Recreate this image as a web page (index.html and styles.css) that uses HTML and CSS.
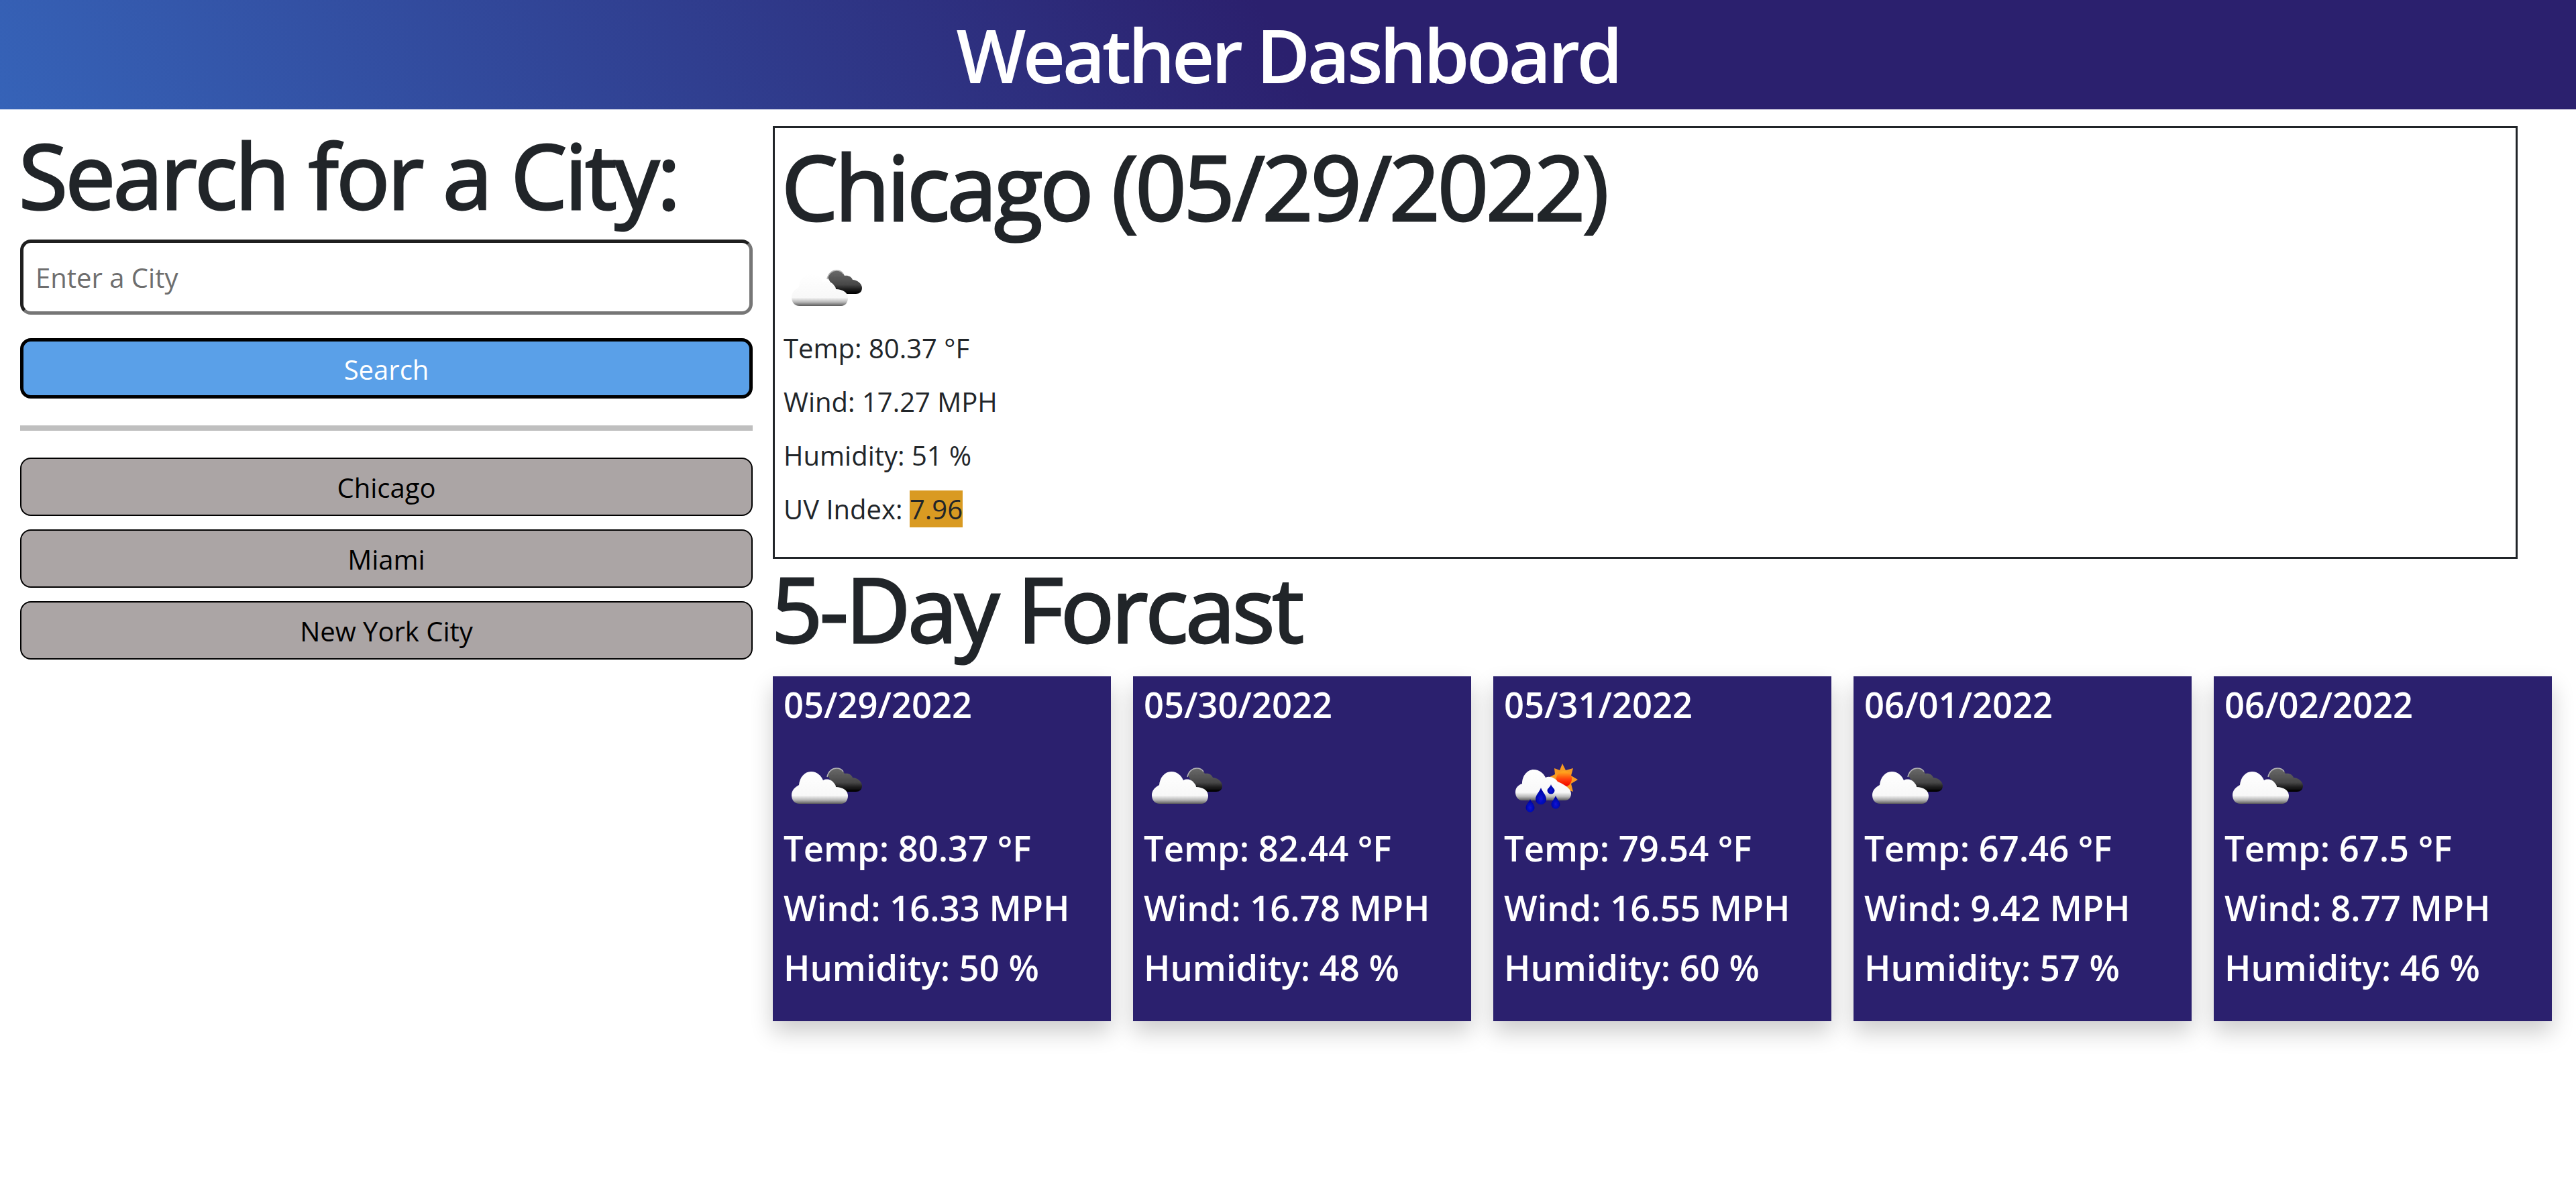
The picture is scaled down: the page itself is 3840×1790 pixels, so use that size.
FILE: index.html
```html
<!DOCTYPE html>
<html lang="en">
<head>
  <meta charset="UTF-8">
  <title>Weather Dashboard</title>
  <link rel="stylesheet" href="styles.css">
</head>
<body>
  <svg class="icon-defs" aria-hidden="true">
    <defs>
      <linearGradient id="whiteCloud" x1="0" y1="0" x2="0" y2="1">
        <stop offset="0" stop-color="#ffffff"/>
        <stop offset="0.74" stop-color="#f8f8f8"/>
        <stop offset="0.88" stop-color="#b8b8b8"/>
        <stop offset="1" stop-color="#5c5c5c"/>
      </linearGradient>
      <linearGradient id="darkCloud" x1="0" y1="0" x2="0" y2="1">
        <stop offset="0" stop-color="#6a6a6a"/>
        <stop offset="0.6" stop-color="#484848"/>
        <stop offset="0.85" stop-color="#151515"/>
        <stop offset="1" stop-color="#000000"/>
      </linearGradient>
      <linearGradient id="sunFill" x1="0" y1="0" x2="0" y2="1">
        <stop offset="0" stop-color="#ffb020"/>
        <stop offset="0.55" stop-color="#ff3a08"/>
        <stop offset="1" stop-color="#f00000"/>
      </linearGradient>
      <radialGradient id="dropFill" cx="0.5" cy="0.65" r="0.6">
        <stop offset="0" stop-color="#0a14d8"/>
        <stop offset="1" stop-color="#00009a"/>
      </radialGradient>
      <filter id="soft" x="-10%" y="-10%" width="120%" height="120%">
        <feGaussianBlur stdDeviation="0.7"/>
      </filter>
      <symbol id="cloudsIcon" viewBox="0 0 120 120">
        <g filter="url(#soft)">
          <path d="M66 44 C68 36 74 33 79 33 C85 33 89 37 91 41 C96 40 101 42 103 47 C109 47 117 52 117 59 C117 65 113 68 108 68 L80 68 Z" fill="url(#darkCloud)"/>
          <path d="M65 46 C67 37 73 33 79 33 C83 33 87 35 89 38" fill="none" stroke="#b5b5b5" stroke-width="1.6"/>
          <path d="M24 86 C16 86 12 80 12 73 C12 66 17 61 23 58 C24 47 31 38 41 38 C50 38 56 44 59 51 C64 48 72 50 75 55 C77 57 78 59 78 61 C88 61 96 66 96 74 C96 81 92 86 86 86 Z" fill="url(#whiteCloud)"/>
        </g>
      </symbol>
      <symbol id="rainIcon" viewBox="0 0 120 120">
        <g filter="url(#soft)">
          <path d="M87 26 L92 36 L103 33 L100 44 L110 50 L100 56 L103 68 L92 64 L86 72 L80 62 L70 65 L73 54 L66 47 L76 42 L75 33 L83 36 Z" fill="#f79a20"/>
          <circle cx="89.5" cy="49" r="11.5" fill="url(#sunFill)"/>
          <path d="M27 81 C21 81 17 75 17 69 C17 62 21 58 27 56 C27 44 35 35 44 35 C53 35 59 41 62 47 C67 44 76 47 80 53 C87 56 100 62 100 71 C100 77 96 81 91 81 Z" fill="url(#whiteCloud)"/>
          <path d="M55 62 C57 68 63 73 63 79 A8 8 0 0 1 47 79 C47 73 53 68 55 62 Z" fill="url(#dropFill)"/>
          <path d="M39 79 C41 84 45.500 87 45.500 92 A6.500 6.500 0 0 1 32.500 92 C32.500 87 37 84 39 79 Z" fill="url(#dropFill)"/>
          <path d="M77 74 C79 79 83.500 83 83.500 87 A6.500 6.500 0 0 1 70.500 87 C70.500 83 75 79 77 74 Z" fill="url(#dropFill)"/>
          <path d="M70 57 C71 61 75.500 63 75.500 66 A5.500 5.500 0 0 1 64.500 66 C64.500 63 69 61 70 57 Z" fill="url(#dropFill)"/>
        </g>
      </symbol>
    </defs>
  </svg>

  <header class="banner">
    <h1 class="banner-title">Weather Dashboard</h1>
  </header>

  <div class="layout">
    <aside class="sidebar">
      <h1 class="sidebar-title">Search for a City:</h1>
      <input class="city-input" type="text" placeholder="Enter a City">
      <button class="search-btn">Search</button>
      <hr class="divider">
      <div class="history">
        <button class="history-btn">Chicago</button>
        <button class="history-btn">Miami</button>
        <button class="history-btn">New York City</button>
      </div>
    </aside>

    <main class="content">
      <section class="today">
        <h1 class="today-title">Chicago (05/29/2022)</h1>
        <svg class="weather-icon"><use href="#cloudsIcon"/></svg>
        <p class="today-line">Temp: 80.37 °F</p>
        <p class="today-line">Wind: 17.27 MPH</p>
        <p class="today-line">Humidity: 51 %</p>
        <p class="today-line">UV Index: <span class="uv-badge">7.96</span></p>
      </section>

      <h1 class="forecast-title">5-Day Forcast</h1>
      <div class="forecast">
        <article class="day-card">
          <h5 class="day-date">05/29/2022</h5>
          <svg class="weather-icon"><use href="#cloudsIcon"/></svg>
          <p class="day-line">Temp: 80.37 °F</p>
          <p class="day-line">Wind: 16.33 MPH</p>
          <p class="day-line">Humidity: 50 %</p>
        </article>
        <article class="day-card">
          <h5 class="day-date">05/30/2022</h5>
          <svg class="weather-icon"><use href="#cloudsIcon"/></svg>
          <p class="day-line">Temp: 82.44 °F</p>
          <p class="day-line">Wind: 16.78 MPH</p>
          <p class="day-line">Humidity: 48 %</p>
        </article>
        <article class="day-card">
          <h5 class="day-date">05/31/2022</h5>
          <svg class="weather-icon"><use href="#rainIcon"/></svg>
          <p class="day-line">Temp: 79.54 °F</p>
          <p class="day-line">Wind: 16.55 MPH</p>
          <p class="day-line">Humidity: 60 %</p>
        </article>
        <article class="day-card">
          <h5 class="day-date">06/01/2022</h5>
          <svg class="weather-icon"><use href="#cloudsIcon"/></svg>
          <p class="day-line">Temp: 67.46 °F</p>
          <p class="day-line">Wind: 9.42 MPH</p>
          <p class="day-line">Humidity: 57 %</p>
        </article>
        <article class="day-card">
          <h5 class="day-date">06/02/2022</h5>
          <svg class="weather-icon"><use href="#cloudsIcon"/></svg>
          <p class="day-line">Temp: 67.5 °F</p>
          <p class="day-line">Wind: 8.77 MPH</p>
          <p class="day-line">Humidity: 46 %</p>
        </article>
      </div>
    </main>
  </div>
</body>
</html>
```

FILE: styles.css
```css
* {
  box-sizing: border-box;
}

body {
  margin: 0;
  font-family: "Open Sans", "Noto Sans", sans-serif;
  font-size: 40px;
  line-height: 1.5;
  color: #212529;
  background-color: #fff;
}

h1,
h5,
p {
  margin: 0;
}

.icon-defs {
  position: absolute;
  width: 0;
  height: 0;
}

.banner {
  height: 163px;
  background: linear-gradient(60deg, #3663b8 0%, #2b206e 50%);
  text-align: center;
}

.banner-title {
  font-size: 110px;
  font-weight: 600;
  line-height: 163px;
  letter-spacing: -4.6px;
  color: #fff;
}

.layout {
  display: flex;
  padding: 25px 36px 80px 30px;
  gap: 30px;
}

/* left column */
.sidebar {
  width: 1092px;
  flex: none;
}

.sidebar-title {
  font-size: 133px;
  font-weight: 400;
  line-height: 138px;
  letter-spacing: -3.4px;
  -webkit-text-stroke: 3px #212529;
  margin: 4px 0 27px -2px;
}

.city-input {
  display: block;
  width: 100%;
  height: 112px;
  padding: 0 18px;
  border: 5px solid;
  border-color: #1f1f1f #767676 #767676 #1f1f1f;
  border-radius: 16px;
  font: inherit;
  color: #212529;
  background-color: #fff;
}

.city-input::placeholder {
  color: #6e6e6e;
  opacity: 1;
}

.search-btn {
  display: block;
  width: 100%;
  height: 90px;
  margin-top: 35px;
  padding: 3px 0 0;
  border: 5px solid #000;
  border-radius: 16px;
  font: inherit;
  color: #fff;
  background-color: #5aa0e8;
}

.divider {
  height: 8px;
  margin: 40px 0;
  border: none;
  background-color: #bfbfbf;
}

.history {
  display: flex;
  flex-direction: column;
  gap: 20px;
}

.history-btn {
  height: 87px;
  padding: 2px 0 0;
  border: 2px solid #000;
  border-radius: 16px;
  font: inherit;
  color: #000;
  background-color: #aba5a5;
}

/* right column */
.content {
  width: 2652px;
  flex: none;
}

.today {
  width: 2601px;
  height: 645px;
  padding: 0 13px;
  border: 3px solid #212529;
}

.today-title {
  font-size: 133px;
  font-weight: 400;
  line-height: 168px;
  letter-spacing: -3.9px;
  -webkit-text-stroke: 3px #212529;
  margin: 3px 0 8px -3px;
}

.weather-icon {
  display: block;
  width: 120px;
  height: 120px;
}

.today-line {
  margin-bottom: 22px;
  line-height: 58px;
}

.uv-badge {
  background-color: #d99a22;
}

.forecast-title {
  font-size: 133px;
  font-weight: 400;
  line-height: 138px;
  letter-spacing: -4px;
  -webkit-text-stroke: 3px #212529;
  margin: 5px 0 0 -2px;
}

.forecast {
  display: flex;
  gap: 33px;
  margin-top: 32px;
}

.day-card {
  width: 504px;
  height: 514px;
  padding: 10px 16px;
  color: #fff;
  background-color: #2b206e;
  box-shadow: 0 16px 32px rgba(0, 0, 0, 0.2);
}

.day-date {
  font-size: 52.5px;
  font-weight: 600;
  line-height: 64px;
  margin-bottom: 30px;
}

.day-line {
  font-size: 52.5px;
  font-weight: 600;
  line-height: 64px;
  margin-bottom: 25px;
}
```
